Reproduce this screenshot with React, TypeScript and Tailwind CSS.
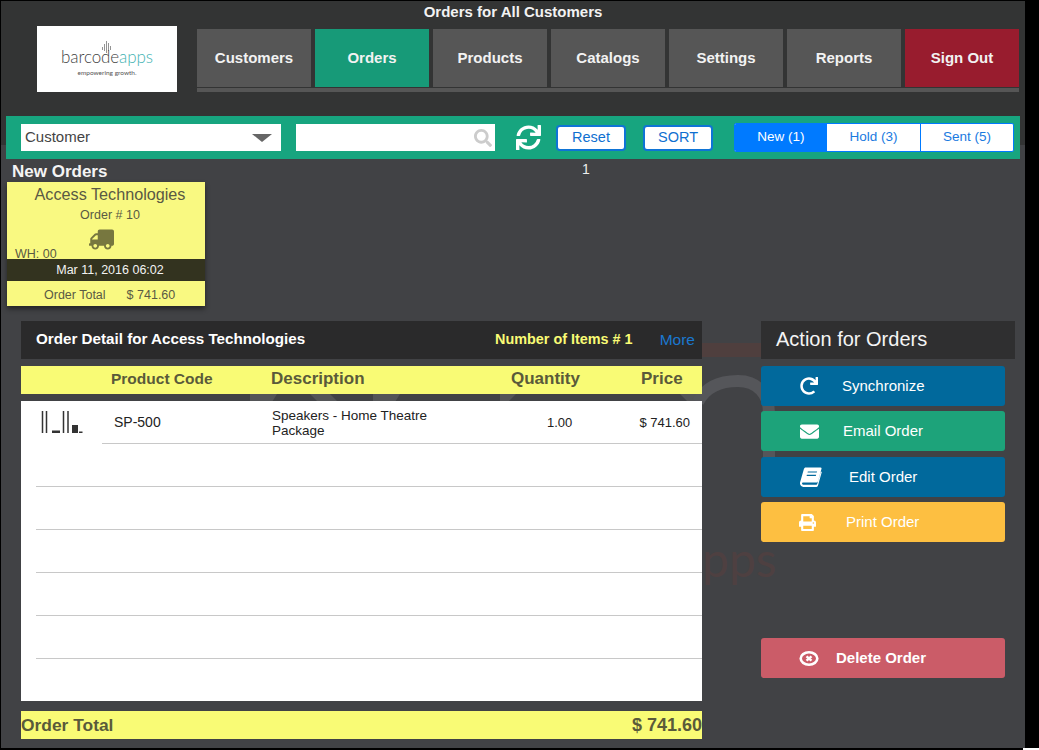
import React from 'react';
import { FaEnvelope, FaPrint, FaRedo, FaSearch, FaSync, FaTruck } from 'react-icons/fa';

const navItems = [
  { label: 'Customers', color: 'bg-[#565656]' },
  { label: 'Orders', color: 'bg-[#179a78]' },
  { label: 'Products', color: 'bg-[#565656]' },
  { label: 'Catalogs', color: 'bg-[#565656]' },
  { label: 'Settings', color: 'bg-[#565656]' },
  { label: 'Reports', color: 'bg-[#565656]' },
  { label: 'Sign Out', color: 'bg-[#981c2e]' },
];

function Logo() {
  return (
    <div className="flex h-[66px] w-[140px] flex-col items-center bg-white pt-[15px]">
      <svg width="9" height="12" viewBox="0 0 9 12" className="ml-[-2px] text-[#666]">
        <path d="M.5 6v3M2.500 3v7M4.500 0v12M6.500 2v8M8.500 5v4" stroke="currentColor" strokeWidth="0.7" />
      </svg>
      <div className="mt-[-6px] font-['Lato'] text-[17px] font-light leading-[20px] tracking-[-0.1px] text-[#444]">
        barcode<span className="text-[#45b3b3]">apps</span>
      </div>
      <div className="mt-[2px] font-['Lato'] text-[6.5px] leading-[8px] text-[#555]">empowering growth.</div>
    </div>
  );
}

function SpeakerThumb() {
  return (
    <svg width="42" height="23" viewBox="0 0 42 23" className="text-[#333]">
      <path d="M1.500 0v22M5.500 0v22M22.500 0v22M27 0v22" stroke="currentColor" strokeWidth="1.5" />
      <path d="M11 19.500h8V22h-8zM31 14h6v8h-6zM38 20.500h3.500V22H38z" fill="currentColor" />
    </svg>
  );
}

function SlantedBook() {
  return (
    <svg width="23" height="20" viewBox="0 0 23 20" fill="currentColor">
      <path d="M6 0h15.500c.8 0 1.200.6 1 1.400l-3.700 13c-.3 1-.9 1.400-1.800 1.400H3c-.7 0-1 .6-.8 1.200.2.700.9 1 1.600 1H17c.5 0 .9-.2 1-.7l3.900-13 .9.5-4 14c-.2.9-.9 1.700-2 1.700H3.500C1.800 20 .4 18.800 0 17.200c-.2-.7-.1-1.300.1-1.800L4 1.800C4.400.7 5 0 6 0zm2.200 4.200-.3 1.200h9.600l.4-1.200zM7.200 7.700l-.3 1.200h9.600l.4-1.200z" fillRule="evenodd" />
    </svg>
  );
}

function DeleteIcon() {
  return (
    <svg width="20" height="15" viewBox="0 0 20 15" fill="none" stroke="currentColor">
      <ellipse cx="10" cy="7.500" rx="8.300" ry="6.200" strokeWidth="2.600" />
      <path d="M7.500 5.300l5 4.400M12.500 5.300l-5 4.400" strokeWidth="2.400" />
    </svg>
  );
}

function ActionButton({
  icon,
  label,
  color,
  iconClass = 'ml-[37px] w-[22px]',
  labelClass = 'ml-[22px]',
  className = '',
}: {
  icon: React.ReactNode;
  label: string;
  color: string;
  iconClass?: string;
  labelClass?: string;
  className?: string;
}) {
  return (
    <div className={`flex h-10 w-[244px] items-center rounded-[3px] text-[15px] text-white ${color} ${className}`}>
      <span className={`flex justify-center ${iconClass}`}>{icon}</span>
      <span className={labelClass}>{label}</span>
    </div>
  );
}

export default function App() {
  const emptyRows = [0, 1, 2, 3, 4];

  return (
    <div className="h-[750px] w-[1039px] overflow-hidden bg-black font-['Liberation_Sans',sans-serif]">
      <div className="relative ml-px mt-px h-[747px] w-[1024px] bg-[linear-gradient(#333434_144px,#414245_144px)]">
        {/* faint logo behind the order panels, coordinates are page pixels */}
        <svg className="absolute left-[199px] top-[334px]" width="600" height="270" viewBox="200 335 600 270" fill="none">
          <path d="M700 350h62" stroke="#4f3f3e" strokeWidth="14" />
          <path d="M250 394h27l-5 8h-22zM310 394h20l8 8h-20zM373 394h27l-5 8h-22zM500 394h16l-8 8h-8zM680 394h22v8h-14z" fill="#545557" />
          <path d="M698 402c8-16 24-21 40-21 20 0 31 14 31 32v80" stroke="#55565a" strokeWidth="12" />
          <text x="702" y="577" fontFamily="Lato, sans-serif" fontSize="48" fill="#4e4041">pps</text>
        </svg>

        {/* top bar */}
        <div className="relative flex h-[22px] items-center justify-center text-[15px] font-bold text-[#f2f2f2]">
          Orders for All Customers
        </div>
        <div className="relative ml-9 mt-[3px] flex">
          <Logo />
          <div className="ml-5 mt-[3px] w-[822px]">
            <div className="flex gap-1">
              {navItems.map((item) => (
                <div
                  key={item.label}
                  className={`flex h-[58px] w-[114px] items-center justify-center pt-px text-[15px] font-bold text-[#f2f2f2] ${item.color}`}
                >
                  {item.label}
                </div>
              ))}
            </div>
            <div className="mt-px h-1 bg-[#565656]" />
          </div>
        </div>

        {/* filter bar */}
        <div className="relative ml-[5px] mt-6 flex h-[43px] w-[1014px] items-center bg-[#17a57f] pl-[15px]">
          <div className="flex h-[27px] w-[260px] items-center justify-between bg-white pl-1 pr-[9px] text-[15px] text-[#444]">
            Customer
            <span className="h-0 w-0 border-x-[10px] border-t-[8px] border-x-transparent border-t-[#666]" />
          </div>
          <div className="ml-[15px] flex h-[27px] w-[199px] items-center justify-end bg-white pr-[3px]">
            <FaSearch className="text-[#ccc]" size={18} />
          </div>
          <FaSync className="ml-[21px] text-white" size={25} />
          <div className="ml-[15px] flex h-[26px] w-[70px] items-center justify-center rounded-[4px] border-2 border-[#0f74d6] bg-white text-[14.5px] text-[#0f6fd0]">
            Reset
          </div>
          <div className="ml-[17px] flex h-[26px] w-[70px] items-center justify-center rounded-[4px] border-2 border-[#0f74d6] bg-white text-[14.5px] text-[#0f6fd0]">
            SORT
          </div>
          <div className="ml-[21px] flex h-[29px] w-[280px] overflow-hidden rounded-[2px] border border-[#007aff] bg-white text-[13.5px] text-[#1a7adf]">
            <div className="flex w-[92px] items-center justify-center bg-[#007aff] text-white">New (1)</div>
            <div className="flex w-[94px] items-center justify-center border-r border-[#007aff]">Hold (3)</div>
            <div className="flex flex-1 items-center justify-center">Sent (5)</div>
          </div>
        </div>

        {/* new orders */}
        <div className="relative flex h-[23px] items-center">
          <span className="ml-[11px] mt-[2px] w-[95px] whitespace-nowrap text-[17px] font-bold text-[#f4f4f4]">New Orders</span>
          <span className="ml-[475px] mt-[-3px] text-[14px] text-[#eee]">1</span>
        </div>
        <div className="relative ml-[6px] h-[124px] w-[198px] bg-[#f9f981] text-[#5a5a44] shadow-[0_3px_5px_rgba(0,0,0,0.45)]">
          <div className="pl-2 pt-[2px] text-center text-[16.2px] leading-[20px]">Access Technologies</div>
          <div className="mt-1 pl-2 text-center text-[12.5px] leading-[14px]">Order # 10</div>
          <div className="ml-[82px] mt-[5px] h-[20px] text-[#77773f]">
            <FaTruck size={25} className="-scale-x-100" />
          </div>
          <div className="ml-2 mt-px h-[11px] text-[12.5px] leading-[13px]">WH: 00</div>
          <div className="flex h-[22px] items-center justify-center bg-[#33331f] pl-2 text-[12.5px] text-[#f2f2f2]">
            Mar 11, 2016 06:02
          </div>
          <div className="mt-[7px] flex text-[12.5px] leading-[14px]">
            <span className="ml-[37px]">Order Total</span>
            <span className="ml-[21px]">$ 741.60</span>
          </div>
        </div>

        <div className="relative ml-5 mt-[15px] flex">
          {/* order detail */}
          <div className="w-[681px]">
            <div className="flex h-[38px] items-center bg-[#2a2a2b] pb-px pl-[15px] pr-[7px] text-[15.2px] font-bold text-white">
              <span className="w-[460px]">Order Detail for Access Technologies</span>
              <span className="w-[165px] text-[14.4px] text-[#f9fb75]">Number of Items # 1</span>
              <span className="text-[15.5px] font-normal text-[#1a78d0]">More</span>
            </div>
            <div className="mt-[7px] flex h-7 items-center bg-[#f9fb75] pb-[3px] text-[17px] font-bold text-[#5a5a3a]">
              <span className="ml-[90px] w-[160px] text-[15.5px]">Product Code</span>
              <span className="w-[240px]">Description</span>
              <span className="w-[130px]">Quantity</span>
              <span>Price</span>
            </div>
            <div className="mt-[7px] h-[300px] bg-white text-[13px] text-[#222]">
              <div className="flex h-[43px]">
                <div className="ml-[20px] mt-[10px] w-[61px]">
                  <SpeakerThumb />
                </div>
                <div className="flex flex-1 items-center border-b border-[#c8c8c8] pt-px">
                  <span className="ml-3 w-[158px] text-[14px]">SP-500</span>
                  <span className="w-[275px] text-[13.5px] leading-[15px]">
                    Speakers - Home Theatre
                    <br />
                    Package
                  </span>
                  <span className="w-[92px]">1.00</span>
                  <span className="w-[51px] whitespace-nowrap text-right">$ 741.60</span>
                </div>
              </div>
              {emptyRows.map((row) => (
                <div key={row} className="ml-[15px] h-[43px] border-b border-[#c8c8c8]" />
              ))}
            </div>
            <div className="mt-[10px] flex h-7 items-center justify-between bg-[#f9fb75] pt-px text-[17.4px] font-bold text-[#5a5a3a]">
              <span>Order Total</span>
              <span className="text-[18px]">$ 741.60</span>
            </div>
          </div>

          {/* actions */}
          <div className="ml-[59px] w-[254px]">
            <div className="flex h-[38px] items-center bg-[#2f2f30] pb-[2px] pl-[15px] text-[20px] text-[#f4f4f4]">
              Action for Orders
            </div>
            <ActionButton className="mt-[7px]" color="bg-[#01699c]" label="Synchronize" icon={<FaRedo size={18} />} />
            <ActionButton className="mt-[5px]" color="bg-[#1da37a]" label="Email Order" icon={<FaEnvelope size={19} />} labelClass="ml-[23px]" />
            <ActionButton className="mt-[6px]" color="bg-[#01699c]" label="Edit Order" icon={<SlantedBook />} iconClass="ml-[39px] w-[22px]" labelClass="ml-[27px]" />
            <ActionButton className="mt-[5px] text-[#fdf2d0]" color="bg-[#fdbf41]" label="Print Order" icon={<FaPrint size={17} />} iconClass="ml-[35px] w-[22px]" labelClass="ml-[28px]" />
            <ActionButton className="mt-24 text-[15.5px] font-bold" color="bg-[#cb5c68]" label="Delete Order" icon={<DeleteIcon />} labelClass="ml-[16px]" />
          </div>
        </div>
      </div>
      <div className="ml-[1023px] h-[2px] bg-white" />
    </div>
  );
}
